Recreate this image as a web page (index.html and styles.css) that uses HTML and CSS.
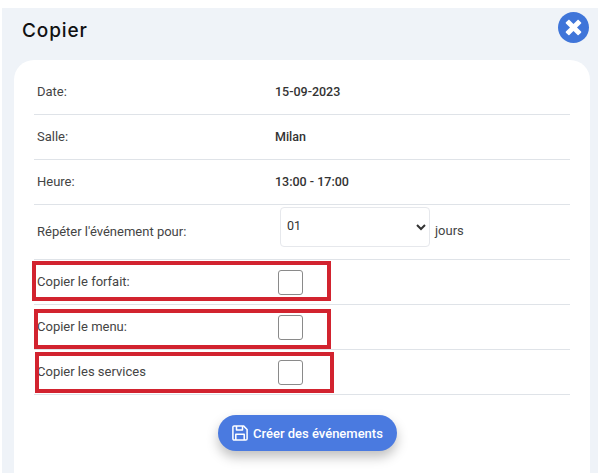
FILE: index.html
```html
<!DOCTYPE html>
<html lang="fr">
<head>
    <meta charset="UTF-8">
    <meta name="viewport" content="width=device-width, initial-scale=1.0">
    <title>Copier</title>
    <link rel="stylesheet" href="styles.css">
</head>
<body>
    <div class="panel">
        <div class="panel-header">
            <h1>Copier</h1>
            <button class="close-button" aria-label="Fermer">
                <svg viewBox="8 8 496 496" width="31" height="31"><path fill="#3f75d9" d="M256 8C119 8 8 119 8 256s111 248 248 248 248-111 248-248S393 8 256 8z"/><path fill="#fff" d="M377.600 321.100c4.700 4.700 4.700 12.300 0 17L338 377.600c-4.700 4.700-12.300 4.700-17 0L256 312l-65.100 65.600c-4.700 4.700-12.300 4.700-17 0L134.400 338c-4.700-4.700-4.700-12.300 0-17l65.600-65-65.600-65.100c-4.700-4.700-4.700-12.300 0-17l39.600-39.600c4.700-4.700 12.300-4.700 17 0l65 65.700 65.100-65.600c4.700-4.700 12.300-4.700 17 0l39.600 39.600c4.700 4.700 4.700 12.300 0 17L312 256l65.600 65.100z"/></svg>
            </button>
        </div>

        <div class="card">
            <div class="row row-first">
                <span class="label">Date:</span>
                <span class="value">15-09-2023</span>
            </div>
            <div class="row">
                <span class="label">Salle:</span>
                <span class="value">Milan</span>
            </div>
            <div class="row">
                <span class="label">Heure:</span>
                <span class="value">13:00 - 17:00</span>
            </div>
            <div class="row row-repeat">
                <span class="label">Répéter l'événement pour:</span>
                <div class="repeat-field">
                    <select class="days-select">
                        <option>01</option>
                        <option>02</option>
                        <option>03</option>
                    </select>
                    <span class="label">jours</span>
                </div>
            </div>
            <div class="row row-check">
                <label class="label" for="forfait">Copier le forfait:</label>
                <input class="check" type="checkbox" id="forfait">
                <div class="mark mark-forfait"></div>
            </div>
            <div class="row row-check">
                <label class="label" for="menu">Copier le menu:</label>
                <input class="check" type="checkbox" id="menu">
                <div class="mark mark-menu"></div>
            </div>
            <div class="row row-check">
                <label class="label" for="services">Copier les services</label>
                <input class="check" type="checkbox" id="services">
                <div class="mark mark-services"></div>
            </div>

            <div class="actions">
                <button class="button">
                    <svg viewBox="0 0 16 16" width="16" height="16" fill="none" stroke="#fff" stroke-width="1.5" stroke-linejoin="round"><path d="M2.200 0.900h9.300l3.600 3.600v9.300a1.300 1.300 0 0 1-1.300 1.300H2.200a1.300 1.300 0 0 1-1.300-1.300V2.200a1.300 1.300 0 0 1 1.300-1.300z"/><path d="M4.500 1v4h6V1"/><path d="M3.800 15V9.200h8.400V15"/></svg>
                    <span class="button-text">Créer des événements</span>
                </button>
            </div>
        </div>
    </div>
</body>
</html>
```

FILE: styles.css
```css
* {
    box-sizing: border-box;
}
body {
    font-family: Roboto, 'Liberation Sans', sans-serif;
    margin: 0;
    height: 473px;
    overflow: hidden;
    background: white;
    color: #444;
}
.panel {
    margin: 8px 1px 0 2px;
    height: 465px;
    background: #eff3f8;
    padding: 0 8px 0 12px;
    display: flex;
    flex-direction: column;
}
.panel-header {
    height: 52px;
    flex-shrink: 0;
    display: flex;
    justify-content: space-between;
    align-items: flex-start;
}
.panel-header h1 {
    font-family: Inter, 'Open Sans', sans-serif;
    font-size: 19px;
    font-weight: 500;
    letter-spacing: 0.9px;
    color: #111;
    margin: 11px 0 0 8px;
    line-height: 24px;
}
.close-button {
    background: none;
    border: none;
    padding: 0;
    margin: 4px 1px 0 0;
    line-height: 0;
    cursor: pointer;
}
.card {
    flex: 1;
    background: white;
    border-radius: 20px 20px 0 0;
    padding: 0 20px;
}
.row {
    position: relative;
    display: flex;
    align-items: center;
    height: 45px;
    padding-left: 3px;
    padding-bottom: 2px;
    border-bottom: 1px solid #dfe3e8;
    font-size: 13px;
}
.row-first {
    height: 55px;
    padding-top: 8px;
    padding-bottom: 0;
}
.row-repeat {
    height: 55px;
}
.label {
    width: 238px;
    flex-shrink: 0;
}
.value {
    font-size: 12.5px;
    font-weight: 500;
    color: #333;
}
.repeat-field {
    display: flex;
    align-items: center;
    gap: 5px;
    margin-left: 5px;
    margin-top: -4px;
}
.repeat-field .label {
    width: auto;
    margin-top: 3px;
}
.days-select {
    width: 150px;
    height: 40px;
    padding: 0 2px 2px;
    margin-bottom: 5px;
    border: 1px solid #e6e8ec;
    border-radius: 4px;
    background: white;
    color: #333;
    font-family: inherit;
    font-size: 12.5px;
}
.check {
    appearance: none;
    width: 25px;
    height: 25px;
    margin: 2px 0 0 2.5px;
    background: white;
    border: 1px solid #8a8a8a;
    border-radius: 3px;
}
.mark {
    position: absolute;
    border: 4px solid #d2232f;
    pointer-events: none;
}
.mark-forfait {
    left: -2px;
    top: 1px;
    width: 299px;
    height: 40px;
}
.mark-menu {
    left: 0;
    top: 4px;
    width: 297px;
    height: 40px;
}
.mark-services {
    left: 1px;
    top: 2px;
    width: 299px;
    height: 41px;
}
.actions {
    display: flex;
    justify-content: center;
    padding-top: 20px;
    padding-left: 11px;
}
.button {
    display: flex;
    align-items: center;
    gap: 5px;
    height: 36px;
    width: 179px;
    padding: 0 0 0 14px;
    background: #4a7ae0;
    color: white;
    border: none;
    border-radius: 18px;
    font-family: inherit;
    font-size: 13px;
    font-weight: 500;
    white-space: nowrap;
    box-shadow: 0 6px 12px rgba(0, 0, 0, 0.25);
    cursor: pointer;
}
.button-text {
    padding-top: 1px;
}
```
